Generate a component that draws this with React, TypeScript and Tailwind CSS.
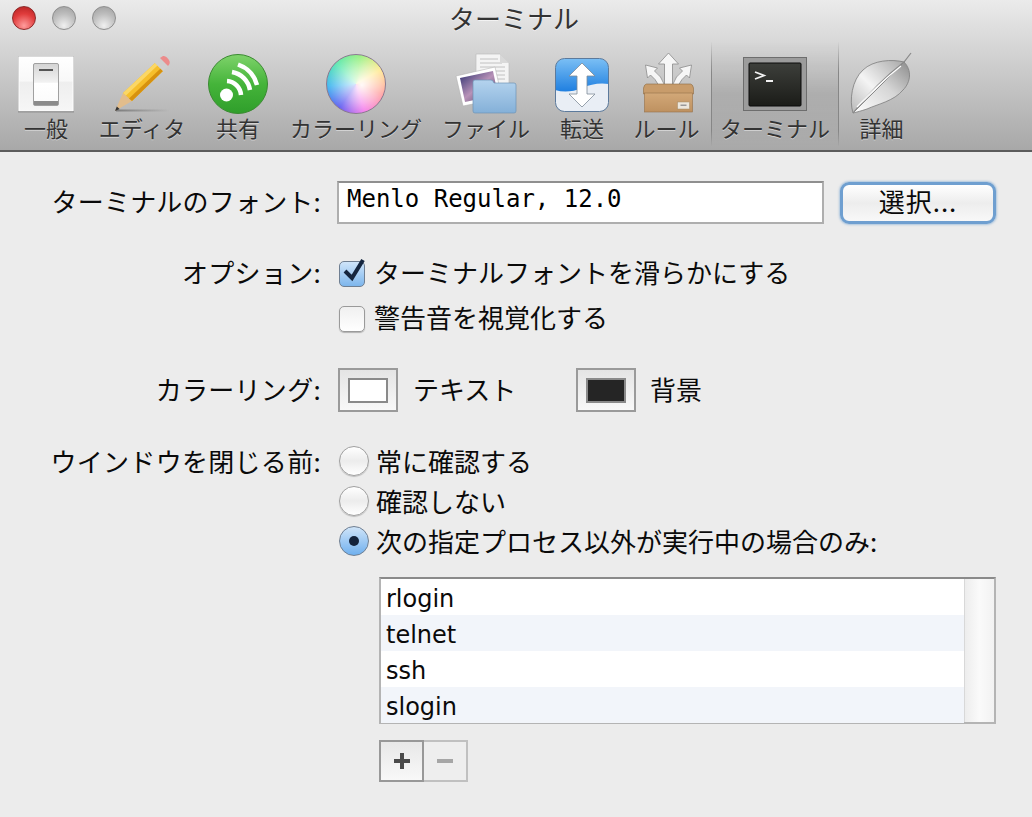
import type { ReactNode } from "react";

function SwitchIcon() {
  return (
    <svg width="64" height="64" viewBox="14 52 64 64">
      <defs>
        <linearGradient id="sw" x1="0" y1="0" x2="0" y2="1">
          <stop offset="0" stopColor="#d4d4d4" />
          <stop offset="0.45" stopColor="#f2f2f2" />
          <stop offset="0.46" stopColor="#ffffff" />
          <stop offset="1" stopColor="#fafafa" />
        </linearGradient>
        <linearGradient id="swf" x1="0" y1="0" x2="0" y2="1">
          <stop offset="0" stopColor="#ffffff" />
          <stop offset="0.45" stopColor="#f8f8f8" />
          <stop offset="0.46" stopColor="#eeeeee" />
          <stop offset="1" stopColor="#f6f6f6" />
        </linearGradient>
      </defs>
      <rect x="18" y="56" width="56" height="56" fill="#b5b5b5" />
      <rect x="19" y="57" width="54" height="54" fill="url(#swf)" stroke="#ffffff" strokeWidth="1" />
      <rect x="33.5" y="63.5" width="25" height="42" rx="1.5" fill="url(#sw)" stroke="#a0a0a0" />
      <rect x="34" y="101" width="24" height="4" fill="#8b8b8b" />
      <rect x="39" y="69" width="14" height="2" fill="#555" />
      <rect x="18" y="111" width="56" height="1.5" fill="#7a7a7a" opacity="0.6" />
    </svg>
  );
}

function PencilIcon() {
  return (
    <svg width="64" height="64" viewBox="110 52 64 64">
      <defs>
        <linearGradient id="shadow" x1="0" y1="0" x2="1" y2="0">
          <stop offset="0" stopColor="#555" stopOpacity="0.6" />
          <stop offset="1" stopColor="#555" stopOpacity="0" />
        </linearGradient>
      </defs>
      <rect x="116" y="109.5" width="54" height="2" fill="url(#shadow)" />
      <path d="M115 111 L123 93 L132 101 Z" fill="#e2bd8c" />
      <path d="M115 111 L116.8 106.6 L119.6 109 Z" fill="#333" />
      <path d="M123 93 L155 63 L163 71 L132 101 Z" fill="#f6bf2c" />
      <path d="M123 93 L155 63 L157.5 65.5 L126 95.5 Z" fill="#fbd765" />
      <path d="M129 98.5 L160.5 68.5 L163 71 L132 101 Z" fill="#d7920f" />
      <path d="M155 63 L160 58 L168 66 L163 71 Z" fill="#cfcfcf" />
      <path d="M160 58 L163 56 Q165 55.5 167 57.5 L169 60 Q170.5 62.5 169.5 64 L168 66 Z" fill="#ec8b8b" />
    </svg>
  );
}

function RssIcon() {
  return (
    <svg width="64" height="64" viewBox="206 52 64 64">
      <defs>
        <linearGradient id="rss" x1="0" y1="0" x2="0" y2="1">
          <stop offset="0" stopColor="#7fd36b" />
          <stop offset="0.5" stopColor="#45b43a" />
          <stop offset="1" stopColor="#2f9e2b" />
        </linearGradient>
      </defs>
      <circle cx="238" cy="84" r="29.5" fill="url(#rss)" stroke="#3b8a32" />
      <circle cx="226.5" cy="95" r="6.5" fill="#fff" />
      <g fill="none" stroke="#fff" strokeWidth="4.5">
        <path d="M227 81 A15 15 0 0 1 241 95" />
        <path d="M232 72 A22 22 0 0 1 250 90" />
        <path d="M238 64.5 A30 30 0 0 1 257 85" />
      </g>
    </svg>
  );
}

function FilesIcon() {
  return (
    <svg width="64" height="64" viewBox="454 52 64 64">
      <defs>
        <linearGradient id="folder" x1="0" y1="0" x2="0" y2="1">
          <stop offset="0" stopColor="#b4d3ee" />
          <stop offset="1" stopColor="#84b0d8" />
        </linearGradient>
        <linearGradient id="photo" x1="0" y1="0" x2="1" y2="1">
          <stop offset="0" stopColor="#2b2f6e" />
          <stop offset="0.5" stopColor="#b892b8" />
          <stop offset="1" stopColor="#3a3358" />
        </linearGradient>
      </defs>
      <path d="M476 54 H500 L509 63 V95 H476 Z" fill="#f4f4f4" stroke="#bdbdbd" strokeWidth="0.7" />
      <g stroke="#b5b5b5" strokeWidth="0.8">
        <path d="M480 59 H498 M480 63 H502 M480 67 H505 M480 71 H505 M480 75 H505 M480 79 H505" />
      </g>
      <path d="M500 54 V63 H509 Z" fill="#d9d9d9" />
      <path d="M456 76 L495 67 L502 98 L463 106 Z" fill="#fff" stroke="#aaa" strokeWidth="0.5" />
      <path d="M460 78 L493 71 L498 95 L465 102 Z" fill="url(#photo)" />
      <path d="M473 82 Q473 80 475 80 H491 Q493 80 494 83 H514 Q516 83 516 85 V111 Q516 113 514 113 H475 Q473 113 473 111 Z" fill="url(#folder)" stroke="#6d93b6" strokeWidth="0.7" />
    </svg>
  );
}

function TransferIcon() {
  return (
    <svg width="64" height="64" viewBox="550 52 64 64">
      <defs>
        <linearGradient id="sky" x1="0" y1="0" x2="0" y2="1">
          <stop offset="0" stopColor="#7cc0f5" />
          <stop offset="1" stopColor="#1f7fe0" />
        </linearGradient>
        <clipPath id="tr">
          <rect x="555.5" y="58.5" width="53" height="53" rx="9" />
        </clipPath>
      </defs>
      <g clipPath="url(#tr)">
        <rect x="555" y="58" width="54" height="54" fill="#e9eef5" />
        <path d="M555 58 H609 V84 Q595 82 582 88 Q568 94 555 90 Z" fill="url(#sky)" />
      </g>
      <rect x="555.5" y="58.5" width="53" height="53" rx="9" fill="none" stroke="#5c7a9c" />
      <path d="M582 63 L595 76 H587 V94 H595 L582 107 L569 94 H577 V76 H569 Z" fill="#fff" stroke="#7d8a98" strokeWidth="0.8" />
    </svg>
  );
}

function BoxIcon() {
  return (
    <svg width="64" height="64" viewBox="634.5 52 64 64">
      <defs>
        <linearGradient id="card" x1="0" y1="0" x2="0" y2="1">
          <stop offset="0" stopColor="#d2a878" />
          <stop offset="1" stopColor="#be9160" />
        </linearGradient>
      </defs>
      <g fill="#f6f6f6" stroke="#8a8a8a" strokeWidth="0.8">
        <path d="M668 53 L678 64 H672 V86 H664 V64 H658 Z" />
        <path d="M645 65 L657 68 L654 71 Q661 76 664 85 H658 Q655 79 650 75 L647 78 Z" />
        <path d="M691 65 L689 78 L686 75 Q681 79 678 85 H672 Q675 76 682 71 L679 68 Z" />
      </g>
      <path d="M643 88 Q644 84 646 84 H690 Q692 84 693 88 V94 H643 Z" fill="#c89c6b" stroke="#8f6d45" strokeWidth="0.6" />
      <rect x="644" y="93" width="48" height="19" fill="url(#card)" stroke="#94714a" strokeWidth="0.6" />
      <rect x="677" y="102" width="12" height="7" fill="#ece7dd" stroke="#a48a66" strokeWidth="0.5" />
      <rect x="680" y="104.5" width="6" height="1.5" fill="#999" />
    </svg>
  );
}

function TerminalIcon() {
  return (
    <svg width="64" height="64" viewBox="744 52 64 64">
      <defs>
        <linearGradient id="term" x1="0" y1="0" x2="0" y2="1">
          <stop offset="0" stopColor="#3d3f3b" />
          <stop offset="1" stopColor="#1b1c18" />
        </linearGradient>
      </defs>
      <rect x="744.5" y="57.5" width="63" height="53" fill="#9c9c9c" stroke="#6d6d6d" />
      <rect x="750" y="63" width="52" height="43" rx="1" fill="url(#term)" stroke="#0a0a0a" />
      <path d="M756 72 L765 75.5 L756 79" fill="none" stroke="#f2f2f2" strokeWidth="1.8" />
      <rect x="767" y="80" width="7" height="2" fill="#f2f2f2" />
    </svg>
  );
}

function LeafIcon() {
  return (
    <svg width="64" height="64" viewBox="850 52 64 64">
      <defs>
        <linearGradient id="leafTop" x1="0" y1="1" x2="1" y2="0">
          <stop offset="0" stopColor="#b8b8b8" />
          <stop offset="0.45" stopColor="#f4f4f4" />
          <stop offset="1" stopColor="#a8a8a8" />
        </linearGradient>
        <linearGradient id="leafBottom" x1="0" y1="1" x2="1" y2="0">
          <stop offset="0" stopColor="#ffffff" />
          <stop offset="0.55" stopColor="#d6d6d6" />
          <stop offset="1" stopColor="#8c8c8c" />
        </linearGradient>
      </defs>
      <path d="M853 113 C849 100 852 80 863 70 C873 60 892 59 904 62 Z" fill="url(#leafTop)" stroke="#7c7c7c" strokeWidth="0.8" />
      <path d="M853 113 L904 62 C912 70 911 82 903 90 C894 101 878 104 867 109 C861 111 857 112 853 113 Z" fill="url(#leafBottom)" stroke="#7c7c7c" strokeWidth="0.8" />
      <path d="M853 113 C868 94 886 76 904 62 L911 53" fill="none" stroke="#8a8a8a" strokeWidth="1.2" />
      <path d="M857 107 C870 93 886 78 901 66" fill="none" stroke="#fff" strokeWidth="1.2" />
    </svg>
  );
}

const tools: { label: string; w: string; active?: boolean; icon: ReactNode }[] = [
  { label: "一般", w: "w-[92px]", icon: <SwitchIcon /> },
  { label: "エディタ", w: "w-[100px]", icon: <PencilIcon /> },
  { label: "共有", w: "w-[92px]", icon: <RssIcon /> },
  {
    label: "カラーリング",
    w: "w-[144px]",
    icon: (
      <div className="my-[2px] h-[60px] w-[60px] overflow-hidden rounded-full border border-[#8a7a90] bg-[conic-gradient(from_60deg,#ffe36e,#ff7b7b,#f25fe6,#5a55f0,#45b8f0,#5fe8b0,#8aee70,#ffe36e)]">
        <div className="h-full w-full bg-[radial-gradient(circle_at_60%_52%,rgba(255,255,255,0.95),rgba(255,255,255,0.5)_38%,rgba(255,255,255,0)_75%)]" />
      </div>
    ),
  },
  { label: "ファイル", w: "w-[116px]", icon: <FilesIcon /> },
  { label: "転送", w: "w-[76px]", icon: <TransferIcon /> },
  { label: "ルール", w: "w-[91px] pl-[2px]", icon: <BoxIcon /> },
  { label: "ターミナル", w: "w-[128px]", active: true, icon: <TerminalIcon /> },
  { label: "詳細", w: "w-[84px] pl-[1px]", icon: <LeafIcon /> },
];

function Light({ color }: { color: "red" | "gray" }) {
  return (
    <div
      className={
        color === "red"
          ? "h-[24px] w-[24px] rounded-full border border-[#8c2a2a] bg-[radial-gradient(circle_at_50%_85%,#ff9c9c,#e03c3c_55%,#b02020)]"
          : "h-[24px] w-[24px] rounded-full border border-[#8e8e8e] bg-[radial-gradient(circle_at_50%_85%,#f0f0f0,#bdbdbd_55%,#9d9d9d)]"
      }
    />
  );
}

function Row({
  label,
  labelClass = "",
  children,
  className,
}: {
  label?: string;
  labelClass?: string;
  children: ReactNode;
  className: string;
}) {
  return (
    <div className={`grid grid-cols-[321px_1fr] gap-x-[18px] items-center ${className}`}>
      <div className={`text-right tracking-[0.3px] ${labelClass}`}>{label}</div>
      <div className="flex items-center">{children}</div>
    </div>
  );
}

function Checkbox({ checked }: { checked?: boolean }) {
  return (
    <div
      className={
        checked
          ? "relative h-[26px] w-[26px] rounded-[5px] border border-[#6f7f92] bg-gradient-to-b from-[#cfe5fa] to-[#7db6ec]"
          : "relative h-[26px] w-[26px] rounded-[5px] border border-[#9a9a9a] bg-gradient-to-b from-[#f0f0f0] to-white shadow-[0_1px_1px_rgba(0,0,0,0.25)]"
      }
    >
      {checked && (
        <svg className="absolute left-[3px] top-[-6px]" width="26" height="28" viewBox="0 0 26 28">
          <path d="M2 15 L9 22 L20 4" fill="none" stroke="#15263f" strokeWidth="4" />
        </svg>
      )}
    </div>
  );
}

function Radio({ checked }: { checked?: boolean }) {
  return (
    <div
      className={
        checked
          ? "flex h-[30px] w-[30px] items-center justify-center rounded-full border border-[#6f7f92] bg-gradient-to-b from-[#cfe4f8] to-[#6fb0ee]"
          : "h-[30px] w-[30px] rounded-full border border-[#a0a0a0] bg-gradient-to-b from-white via-[#ececec] to-white shadow-[0_1px_1px_rgba(0,0,0,0.2)]"
      }
    >
      {checked && <div className="h-[10px] w-[10px] rounded-full bg-[#13233c]" />}
    </div>
  );
}

function ColorWell({ swatch }: { swatch: string }) {
  return (
    <div className="flex h-[44px] w-[60px] items-center justify-center border-2 border-[#9a9a9a] bg-gradient-to-b from-[#e4e4e4] to-[#f8f8f8]">
      <div className={`h-[25px] w-[40px] ${swatch}`} />
    </div>
  );
}

const processes = ["rlogin", "telnet", "ssh", "slogin"];

export default function App() {
  return (
    <div className="h-[817px] w-[1032px] overflow-hidden bg-[#ececec] font-['Noto_Sans_CJK_JP',sans-serif] text-[26px] leading-[32px] text-[#0a0a0a]">
      {/* title + toolbar */}
      <header className="h-[152px] border-b-2 border-[#5c5c5c] bg-gradient-to-b from-[#ebebeb] to-[#a8a8a8]">
        <div className="grid h-[42px] grid-cols-[1fr_auto_1fr] items-start">
          <div className="flex gap-[16px] pl-[12px] pt-[6px]">
            <Light color="red" />
            <Light color="gray" />
            <Light color="gray" />
          </div>
          <div className="pr-[4px] leading-[36px] text-[#333] [text-shadow:0_1px_0_rgba(255,255,255,0.6)]">ターミナル</div>
          <div />
        </div>
        <div className="flex h-[104px]">
          {tools.map((t) => (
            <div
              key={t.label}
              className={
                t.active
                  ? `${t.w} flex flex-col items-center border-x [border-image:linear-gradient(to_bottom,transparent,#868686_30%,#868686_85%,transparent)_1] bg-gradient-to-b from-transparent via-black/10 to-transparent pt-[10px]`
                  : `${t.w} flex flex-col items-center pt-[10px]`
              }
            >
              <div className="flex h-[64px] items-center justify-center">{t.icon}</div>
              <div className="-mt-[2px] whitespace-nowrap text-[22px] leading-[26px] text-[#333] [text-shadow:0_1px_0_rgba(255,255,255,0.45)]">
                {t.label}
              </div>
            </div>
          ))}
        </div>
      </header>

      <main className="pt-[29px]">
        <div className="grid h-[42px] grid-cols-[321px_1fr] items-center gap-x-[16px]">
          <div className="pb-[4px] text-right tracking-[0.2px]">ターミナルのフォント:</div>
          <div className="flex items-center">
            <div className="flex h-[43px] w-[487px] items-start border-2 border-[#aeaeae] border-t-[#8f8f8f] bg-white pl-[8px] pt-[1px] font-['DejaVu_Sans_Mono',monospace] text-[24px] leading-[30px] text-black">
              Menlo Regular, 12.0
            </div>
            <button className="ml-[16px] flex h-[42px] w-[156px] items-center justify-center rounded-[9px] border-[3px] border-[#6f9fd0] bg-gradient-to-b from-white via-[#ededed] to-[#f8f8f8] pb-[4px] tracking-[1px] shadow-[0_0_2px_1px_rgba(110,160,210,0.5)]">
              選択...
            </button>
          </div>
        </div>

        <Row label="オプション:" labelClass="pb-[4px]" className="mt-[28px] h-[45px]">
          <Checkbox checked />
          <span className="ml-[9px] pb-[4px]">ターミナルフォントを滑らかにする</span>
        </Row>
        <Row className="h-[45px]">
          <Checkbox />
          <span className="ml-[9px] pb-[4px]">警告音を視覚化する</span>
        </Row>

        <Row label="カラーリング:" labelClass="pb-[2px]" className="mt-[27px] h-[44px]">
          <div className="-ml-[1px]">
            <ColorWell swatch="bg-white border-2 border-[#8a8a8a]" />
          </div>
          <span className="ml-[15px] w-[163px] pb-[2px]">テキスト</span>
          <ColorWell swatch="bg-[#252525] border-2 border-[#8a8a8a]" />
          <span className="ml-[14px] pb-[2px]">背景</span>
        </Row>

        <Row label="ウインドウを閉じる前:" className="mt-[29px] h-[40px]">
          <Radio />
          <span className="ml-[7px]">常に確認する</span>
        </Row>
        <Row className="h-[40px]">
          <Radio />
          <span className="ml-[7px]">確認しない</span>
        </Row>
        <Row className="h-[40px]">
          <Radio checked />
          <span className="ml-[7px]">次の指定プロセス以外が実行中の場合のみ:</span>
        </Row>

        <div className="ml-[379px] mt-[16px] flex h-[147px] w-[617px] border-2 border-[#b4b4b4] border-t-[#8a8a8a] bg-white">
          <div className="flex-1 border-r border-[#d8d8d8] font-['DejaVu_Sans',sans-serif] text-[24px]">
            {processes.map((p, i) => (
              <div key={p} className={i % 2 ? "h-[36px] bg-[#f2f5fa] pl-[5px] leading-[40px]" : "h-[36px] pl-[5px] leading-[40px]"}>
                {p}
              </div>
            ))}
          </div>
          <div className="w-[29px] bg-gradient-to-r from-[#ededed] via-[#fafafa] to-[#f2f2f2]" />
        </div>

        <div className="ml-[379px] mt-[16px] flex h-[42px] w-[89px]">
          <button className="flex w-[45px] items-center justify-center border-2 border-[#989898] bg-gradient-to-b from-[#e8e8e8] to-[#f8f8f8]">
            <svg width="18" height="18" viewBox="0 0 18 18">
              <path d="M1 9 H17 M9 1 V17" stroke="#4a4a4a" strokeWidth="4" />
            </svg>
          </button>
          <button className="flex w-[44px] items-center justify-center border-2 border-l-0 border-[#c0c0c0] bg-[#eeeeee]">
            <svg width="18" height="18" viewBox="0 0 18 18">
              <path d="M1 9 H17" stroke="#a6a6a6" strokeWidth="4" />
            </svg>
          </button>
        </div>
      </main>
    </div>
  );
}
